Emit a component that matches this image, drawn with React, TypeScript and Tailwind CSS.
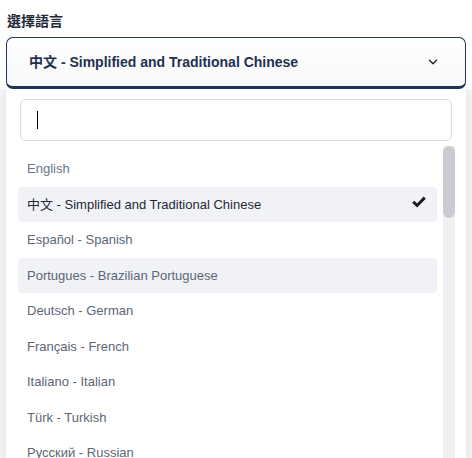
import { ChevronDown } from 'lucide-react'

const languages = [
  'English',
  '中文 - Simplified and Traditional Chinese',
  'Español - Spanish',
  'Portugues - Brazilian Portuguese',
  'Deutsch - German',
  'Français - French',
  'Italiano - Italian',
  'Türk - Turkish',
  'Русский - Russian',
]

const selected = 1
const hovered = 3

export default function App() {
  return (
    <div
      className="h-[458px] w-[472px] overflow-hidden bg-[#f3f4f6]"
      style={{ fontFamily: '"Liberation Sans", Arial, "Noto Sans CJK TC", sans-serif' }}
    >
      <div className="bg-white px-[6px] pt-[11px]">
        <div className="pl-px text-[14px] font-bold leading-[20px] text-[#1f2937]">選擇語言</div>
        <button
          type="button"
          className="mt-[6px] flex h-[52px] w-full items-center justify-between rounded-[7px] border-[1.5px] border-b-[3px] border-[#1d3656] bg-gradient-to-b from-white to-[#f7f8f9] pl-[22px] pr-[25px] text-left"
        >
          <span className="text-[14px] font-bold text-[#1e3150]">中文 - Simplified and Traditional Chinese</span>
          <ChevronDown className="h-[14px] w-[14px] text-[#1e2a3a]" strokeWidth={2.5} />
        </button>
      </div>

      <div className="mx-[6px] h-[370px] bg-white shadow-[0_4px_12px_rgba(15,23,42,0.08)]">
        <div className="px-[14px] pt-[10px]">
          <div className="flex h-[42px] items-center rounded-[6px] border border-[#d8dde4] bg-white pl-[16px]">
            <span className="h-[18px] w-px bg-black" />
          </div>
        </div>
        <div className="mt-[5px] flex">
          <ul className="w-[431px] pl-[12px] pt-[5px]">
            {languages.map((lang, i) => (
              <li
                key={lang}
                className={`flex h-[35.5px] items-center justify-between rounded-[4px] pl-[9px] pr-[10px] text-[13px] ${
                  i === selected || i === hovered ? 'bg-[#f1f2f6]' : ''
                } ${i === selected ? 'text-[#1f2937]' : i === 0 ? 'text-[#66768c]' : 'text-[#5c6676]'}`}
              >
                <span>{lang}</span>
                {i === selected && (
                  <svg viewBox="0 0 16 16" className="mb-[4px] h-[16px] w-[16px]" fill="#1a1a1a">
                    <path d="M1.2 8.8 3.3 6.7 6.1 9.5 12.7 2.6 14.8 4.7 6.1 13.6Z" />
                  </svg>
                )}
              </li>
            ))}
          </ul>
          <div className="ml-[6px] h-[320px] w-[12px] bg-[#eef1f3]">
            <div className="h-[72px] w-full rounded-full bg-[#c9cdd1]" />
          </div>
        </div>
      </div>
    </div>
  )
}
